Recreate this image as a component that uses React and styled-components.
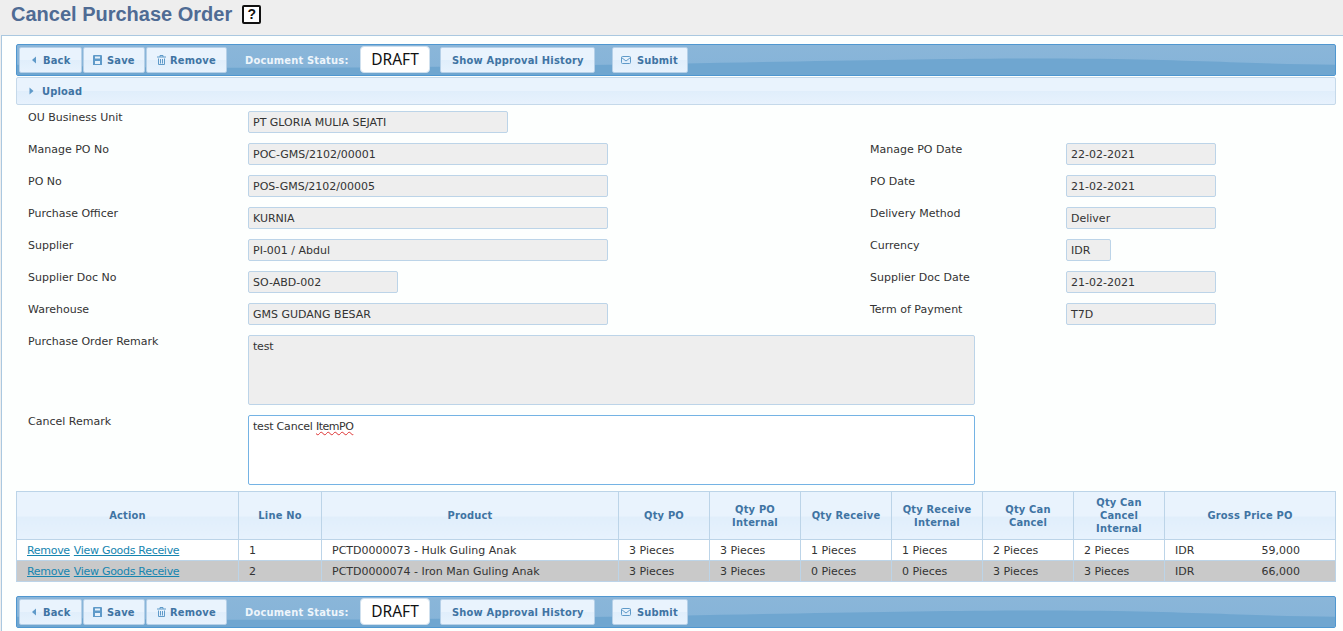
import { createGlobalStyle } from "styled-components";
import styled from "styled-components";

const GlobalStyle = createGlobalStyle`
  html, body {
    margin: 0;
    padding: 0;
    background: #eeeeee;
    overflow: hidden;
  }
  body {
    font-family: "DejaVu Sans", Verdana, sans-serif;
    font-size: 11px;
    color: #333;
  }
`;

const boldText = `
  font-family: "DejaVu Sans Condensed", "DejaVu Sans", sans-serif;
  font-weight: bold;
  letter-spacing: 0.2px;
`;

const barGradient = "linear-gradient(#e9f3fd 0 50%, #e0eefb 50%, #e7f2fd 100%)";

const Page = styled.div`
  width: 1343px;
  height: 631px;
  overflow: hidden;
`;

const Header = styled.header`
  height: 35px;
  display: flex;
  align-items: flex-start;
  padding: 2px 0 0 11px;
  box-sizing: border-box;
`;

const Title = styled.h1`
  margin: 0;
  font-family: "Liberation Sans", Arial, sans-serif;
  font-size: 20px;
  line-height: 24px;
  font-weight: bold;
  color: #4f6b94;
`;

const HelpIcon = styled.span`
  width: 15px;
  height: 15px;
  margin: 3px 0 0 10px;
  border: 2px solid #111;
  border-radius: 2px;
  background: #fff;
  color: #111;
  font-family: "Liberation Sans", Arial, sans-serif;
  font-size: 14px;
  font-weight: bold;
  line-height: 15px;
  text-align: center;
`;

const Panel = styled.main`
  height: 596px;
  box-sizing: border-box;
  margin-left: 1px;
  padding: 8px 7px 0 14px;
  background: #fdfffe;
  border-top: 1px solid #aac8e0;
  border-left: 1px solid #aac8e0;
`;

const ToolbarWrap = styled.div`
  position: relative;
  height: 32px;
  box-sizing: border-box;
  padding: 2px 0 0 2px;
  display: flex;
  align-items: flex-start;
  background: linear-gradient(#8ab6d9, #85b3d8);
  border: 1px solid #4f97d0;
  border-radius: 2px;
  overflow: hidden;
`;

const Wave = styled.svg`
  position: absolute;
  left: 0;
  top: 0;
  width: 100%;
  height: 100%;
`;

const ToolButton = styled.button`
  position: relative;
  width: ${(p) => p.$width}px;
  height: 26px;
  box-sizing: border-box;
  margin: 0 1px 0 0;
  padding: 0 0 0 ${(p) => p.$pad}px;
  display: flex;
  align-items: center;
  gap: ${(p) => p.$gap || 6}px;
  background: ${barGradient};
  border: 1px solid #b5d0e8;
  border-radius: 2px;
  color: #3f74a3;
  font-size: 11px;
  white-space: nowrap;
  ${boldText}
`;

const Grip = styled.span`
  position: relative;
  width: 4px;
  height: 9px;
  margin: 9px ${(p) => p.$right}px 0 7px;
  background-image: radial-gradient(#e6f0f8 0.6px, transparent 0.7px);
  background-size: 2px 2px;
`;

const StatusLabel = styled.span`
  position: relative;
  width: 115px;
  margin: 7px 0 0 0;
  color: #eef5fb;
  white-space: nowrap;
  ${boldText}
`;

const StatusBadge = styled.span`
  position: relative;
  width: 70px;
  height: 27px;
  margin: -1px 10px 0 0;
  box-sizing: border-box;
  background: #fff;
  border: 1px solid #cfe0ee;
  border-radius: 4px;
  color: #111;
  font-family: "Noto Sans", sans-serif;
  font-size: 15.5px;
  line-height: 24px;
  text-align: center;
`;

const UploadBar = styled.div`
  height: 28px;
  margin-top: 1px;
  box-sizing: border-box;
  padding-left: 12px;
  display: flex;
  align-items: center;
  gap: 8px;
  background: ${barGradient};
  border: 1px solid #c5d9ea;
  border-radius: 2px;
  color: #3f74a3;
  ${boldText}
`;

const Form = styled.section`
  margin-top: 1px;
`;

const Row = styled.div`
  display: flex;
  padding: 5px 0 ${(p) => p.$bottom || 5}px 12px;
`;

const Cell = styled.div`
  display: flex;
  width: ${(p) => p.$width || "auto"};
`;

const Label = styled.label`
  width: ${(p) => p.$width || 220}px;
  flex: none;
  line-height: 13px;
  color: #333;
  white-space: nowrap;
`;

const Field = styled.div`
  width: ${(p) => p.$width}px;
  height: ${(p) => p.$height || 22}px;
  box-sizing: border-box;
  padding: ${(p) => (p.$multi ? "3px 4px" : "1px 4px 0")};
  line-height: ${(p) => (p.$multi ? "15px" : "20px")};
  letter-spacing: ${(p) => (p.$multi ? "-0.2px" : "normal")};
  background: ${(p) => (p.$editable ? "#fff" : "#eeeeee")};
  border: 1px solid ${(p) => (p.$editable ? "#74b3e4" : "#bcd4e8")};
  border-radius: 2px;
  color: #333;
  white-space: nowrap;
`;

const Misspelled = styled.span`
  letter-spacing: -0.5px;
  text-decoration: underline wavy #d33 1px;
`;

const Table = styled.table`
  width: 1319px;
  table-layout: fixed;
  border-collapse: collapse;
  border: 1px solid #b5d0e8;
`;

const HeadCell = styled.th`
  height: 47px;
  padding: 0 4px;
  background: ${barGradient};
  border: 1px solid #bcd4e8;
  color: #3f74a3;
  font-size: 11px;
  line-height: 13px;
  ${boldText}
`;

const DataRow = styled.tr`
  background: ${(p) => (p.$alt ? "#c9c9c9" : "#fff")};
`;

const DataCell = styled.td`
  height: 20px;
  padding: 0 0 0 10px;
  border: 1px solid #bcd4e8;
  color: #333;
  white-space: nowrap;
`;

const ActionLink = styled.a`
  margin-right: 4px;
  color: #1685b0;
  letter-spacing: -0.3px;
  text-decoration: underline;
`;

const Price = styled.div`
  display: flex;
  justify-content: space-between;
  padding-right: 35px;
`;

const BottomGap = styled.div`
  height: 14px;
`;

const columns = [
  ["Action", 222],
  ["Line No", 83],
  ["Product", 297],
  ["Qty PO", 91],
  ["Qty PO Internal", 91],
  ["Qty Receive", 91],
  ["Qty Receive Internal", 91],
  ["Qty Can Cancel", 91],
  ["Qty Can Cancel Internal", 91],
  ["Gross Price PO", 171],
];

const lines = [
  { no: 1, product: "PCTD0000073 - Hulk Guling Anak", po: 3, receive: 1, cancel: 2, price: "59,000" },
  { no: 2, product: "PCTD0000074 - Iron Man Guling Anak", po: 3, receive: 0, cancel: 3, price: "66,000" },
];

const pairedRows = [
  ["Manage PO No", "POC-GMS/2102/00001", 360, "Manage PO Date", "22-02-2021", 150],
  ["PO No", "POS-GMS/2102/00005", 360, "PO Date", "21-02-2021", 150],
  ["Purchase Officer", "KURNIA", 360, "Delivery Method", "Deliver", 150],
  ["Supplier", "PI-001 / Abdul", 360, "Currency", "IDR", 45],
  ["Supplier Doc No", "SO-ABD-002", 150, "Supplier Doc Date", "21-02-2021", 150],
  ["Warehouse", "GMS GUDANG BESAR", 360, "Term of Payment", "T7D", 150],
];

const BackIcon = () => (
  <svg width="6" height="8" viewBox="0 0 6 8">
    <path d="M5 0.5V7.5L1 4Z" fill="#5f9ac9" />
  </svg>
);

const SaveIcon = () => (
  <svg width="9" height="10" viewBox="0 0 9 10">
    <path d="M0 1A1 1 0 0 1 1 0H8A1 1 0 0 1 9 1V10H0Z" fill="#5f9ac9" />
    <path d="M2 1.5H7V3.5H2Z M2 6H7V9H2Z" fill="#e6f1fb" />
  </svg>
);

const TrashIcon = () => (
  <svg width="9" height="10" viewBox="0 0 9 10" fill="none" stroke="#5f9ac9">
    <path d="M0 2H9 M3 2V0.5H6V2" />
    <path d="M1.5 3.5V9.5H7.5V3.5 M3.5 4V8.5 M5.5 4V8.5" />
  </svg>
);

const MailIcon = () => (
  <svg width="10" height="8" viewBox="0 0 10 8" fill="none" stroke="#5f9ac9">
    <rect x="0.5" y="0.5" width="9" height="7" rx="1" />
    <path d="M0.5 1.5L5 5L9.5 1.5" />
  </svg>
);

const Toolbar = () => (
  <ToolbarWrap>
    <Wave viewBox="0 0 1320 32" preserveAspectRatio="none">
      <path d="M0 21C200 27 380 24 660 20C850 16 1000 13 1100 15C1200 17 1260 21 1320 21V32H0Z" fill="#6fa6d0" />
    </Wave>
    <ToolButton $width={63} $pad={11}>
      <BackIcon />
      Back
    </ToolButton>
    <ToolButton $width={62} $pad={9} $gap={5}>
      <SaveIcon />
      Save
    </ToolButton>
    <ToolButton $width={81} $pad={10} $gap={4}>
      <TrashIcon />
      Remove
    </ToolButton>
    <Grip $right={6} />
    <StatusLabel>Document Status:</StatusLabel>
    <StatusBadge>DRAFT</StatusBadge>
    <ToolButton $width={155} $pad={11}>
      Show Approval History
    </ToolButton>
    <Grip $right={5} />
    <ToolButton $width={76} $pad={8}>
      <MailIcon />
      Submit
    </ToolButton>
  </ToolbarWrap>
);

const App = () => {
  return (
    <Page>
      <GlobalStyle />
      <Header>
        <Title>Cancel Purchase Order</Title>
        <HelpIcon>?</HelpIcon>
      </Header>
      <Panel>
        <Toolbar />
        <UploadBar>
          <svg width="5" height="8" viewBox="0 0 5 8">
            <path d="M0.5 0.5V7.5L4.5 4Z" fill="#5f9ac9" />
          </svg>
          Upload
        </UploadBar>
        <Form>
          <Row>
            <Label>OU Business Unit</Label>
            <Field $width={260}>PT GLORIA MULIA SEJATI</Field>
          </Row>
          {pairedRows.map((r) => (
            <Row key={r[0]}>
              <Cell $width="842px">
                <Label>{r[0]}</Label>
                <Field $width={r[2]}>{r[1]}</Field>
              </Cell>
              <Cell>
                <Label $width={196}>{r[3]}</Label>
                <Field $width={r[5]}>{r[4]}</Field>
              </Cell>
            </Row>
          ))}
          <Row>
            <Label>Purchase Order Remark</Label>
            <Field $width={727} $height={70} $multi>
              test
            </Field>
          </Row>
          <Row $bottom={6}>
            <Label>Cancel Remark</Label>
            <Field $width={727} $height={70} $multi $editable>
              test Cancel <Misspelled>ItemPO</Misspelled>
            </Field>
          </Row>
        </Form>
        <Table>
          <colgroup>
            {columns.map(([name, w]) => (
              <col key={name} style={{ width: w }} />
            ))}
          </colgroup>
          <thead>
            <tr>
              {columns.map(([name]) => (
                <HeadCell key={name}>{name}</HeadCell>
              ))}
            </tr>
          </thead>
          <tbody>
            {lines.map((l) => (
              <DataRow key={l.no} $alt={l.no === 2}>
                <DataCell>
                  <ActionLink href="#">Remove</ActionLink>
                  <ActionLink href="#">View Goods Receive</ActionLink>
                </DataCell>
                <DataCell>{l.no}</DataCell>
                <DataCell>{l.product}</DataCell>
                <DataCell>{l.po} Pieces</DataCell>
                <DataCell>{l.po} Pieces</DataCell>
                <DataCell>{l.receive} Pieces</DataCell>
                <DataCell>{l.receive} Pieces</DataCell>
                <DataCell>{l.cancel} Pieces</DataCell>
                <DataCell>{l.cancel} Pieces</DataCell>
                <DataCell>
                  <Price>
                    <span>IDR</span>
                    <span>{l.price}</span>
                  </Price>
                </DataCell>
              </DataRow>
            ))}
          </tbody>
        </Table>
        <BottomGap />
        <Toolbar />
      </Panel>
    </Page>
  );
};

export default App;
